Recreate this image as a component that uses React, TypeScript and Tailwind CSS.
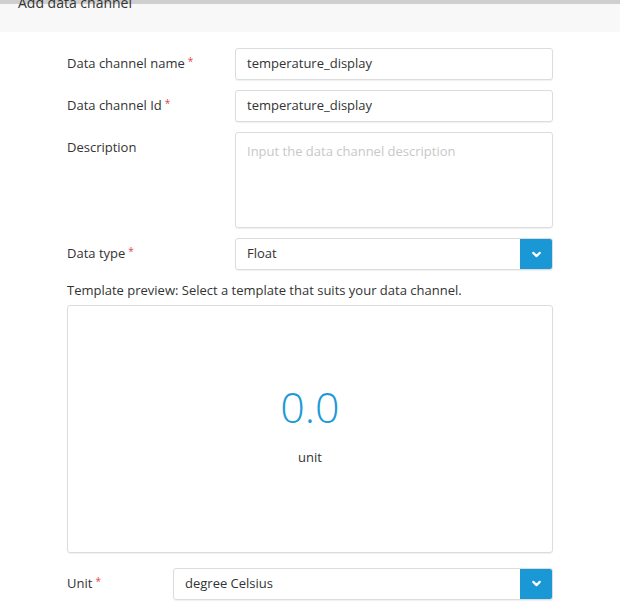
import { ChevronDown } from "lucide-react";

function Req() {
  return <span className="text-[#e0454b] text-[10px] align-top ml-[3px]">*</span>;
}

function FieldRow({ label, required, children, top }: { label: string; required?: boolean; children: React.ReactNode; top?: boolean }) {
  return (
    <div className={`flex ${top ? "items-start" : "items-center"} mb-[10px]`}>
      <div className={`w-[168px] shrink-0 text-[13px] text-[#333] ${top ? "pt-[6px]" : ""}`}>
        {label}
        {required && <Req />}
      </div>
      {children}
    </div>
  );
}

function Select({ value, className }: { value: string; className?: string }) {
  return (
    <div className={`flex h-[32px] border border-[#dcdcdc] rounded-[3px] shadow-[0_1px_1px_rgba(0,0,0,0.06)] overflow-hidden ${className ?? ""}`}>
      <div className="flex-1 flex items-center px-[11px] text-[13px] text-[#333]">{value}</div>
      <div className="w-[32px] bg-[#1998d5] flex items-center justify-center text-white">
        <ChevronDown size={13} strokeWidth={4} />
      </div>
    </div>
  );
}

export default function App() {
  return (
    <div className="w-[620px] h-[616px] bg-white overflow-hidden font-['Open_Sans',sans-serif]">
      <div className="h-[32px] bg-[#f8f8f8] relative border-t-[4px] border-[#cfcfcf]">
        <div className="absolute left-[18px] top-[-12px] text-[14px] text-[#333]">Add data channel</div>
      </div>
      <div className="pl-[67px] pr-[67px] pt-[16px]">
        <FieldRow label="Data channel name" required>
          <div className="flex-1 h-[32px] border border-[#dcdcdc] rounded-[3px] flex items-center px-[11px] text-[13px] text-[#333] shadow-[0_1px_1px_rgba(0,0,0,0.06)]">
            temperature_display
          </div>
        </FieldRow>
        <FieldRow label="Data channel Id" required>
          <div className="flex-1 h-[32px] border border-[#dcdcdc] rounded-[3px] flex items-center px-[11px] text-[13px] text-[#333] shadow-[0_1px_1px_rgba(0,0,0,0.06)]">
            temperature_display
          </div>
        </FieldRow>
        <FieldRow label="Description" top>
          <div className="flex-1 h-[96px] border border-[#dcdcdc] rounded-[3px] px-[11px] pt-[9px] text-[13px] text-[#c8c8c8] shadow-[0_1px_1px_rgba(0,0,0,0.06)]">
            Input the data channel description
          </div>
        </FieldRow>
        <FieldRow label="Data type" required>
          <Select value="Float" className="flex-1" />
        </FieldRow>
        <div className="text-[13px] text-[#333] mt-[11px] mb-[4px]">
          Template preview: Select a template that suits your data channel.
        </div>
        <div className="h-[248px] border border-[#dcdcdc] rounded-[3px] flex flex-col items-center justify-center shadow-[0_1px_1px_rgba(0,0,0,0.06)]">
          <div className="text-[43px] leading-none text-[#1a9ad6] font-light mt-[-4px]">0.0</div>
          <div className="text-[13px] text-[#333] mt-[20px]">unit</div>
        </div>
        <div className="flex items-center mt-[15px]">
          <div className="w-[106px] shrink-0 text-[13px] text-[#333]">
            Unit
            <Req />
          </div>
          <Select value="degree Celsius" className="flex-1" />
        </div>
      </div>
    </div>
  );
}
